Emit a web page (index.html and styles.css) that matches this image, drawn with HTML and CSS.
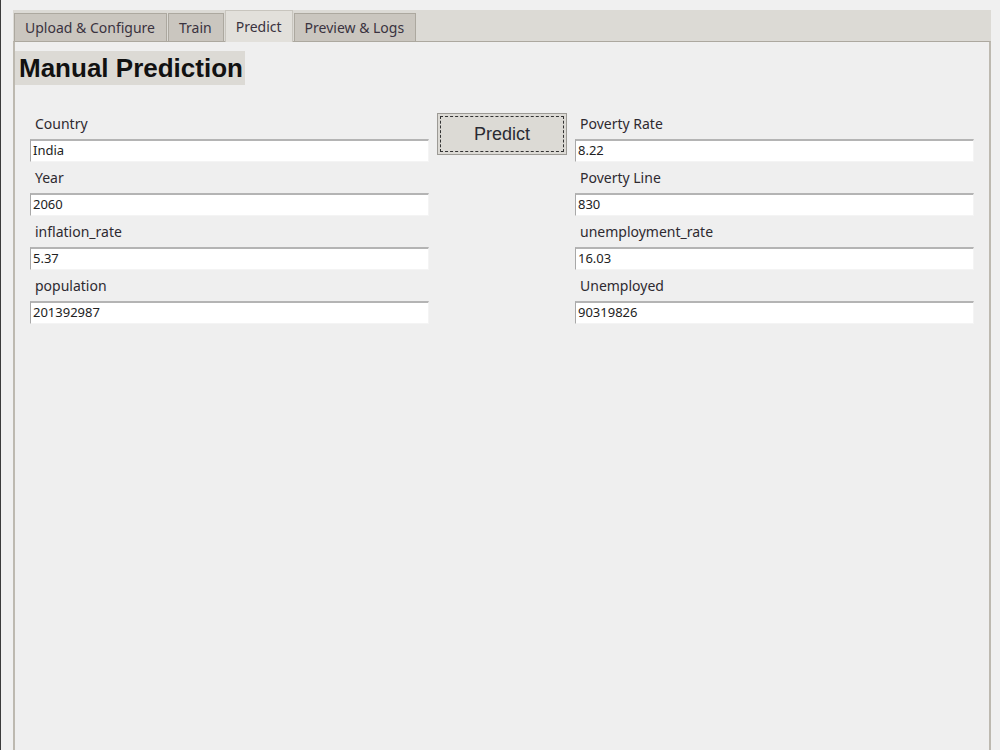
FILE: index.html
```html
<!DOCTYPE html>
<html>
<head>
<meta charset="utf-8">
<link rel="stylesheet" href="styles.css">
</head>
<body>
<div class="app">
  <div class="notebook">
    <div class="tabbar">
      <div class="tab">Upload &amp; Configure</div>
      <div class="tab">Train</div>
      <div class="tab active">Predict</div>
      <div class="tab">Preview &amp; Logs</div>
    </div>
    <div class="pane">
      <h1 class="title">Manual Prediction</h1>
      <div class="form">
        <div class="col">
          <div class="label">Country</div>
          <div class="entry">India</div>
          <div class="label">Year</div>
          <div class="entry">2060</div>
          <div class="label">inflation_rate</div>
          <div class="entry">5.37</div>
          <div class="label">population</div>
          <div class="entry">201392987</div>
        </div>
        <div class="btncol">
          <button class="predict">Predict</button>
        </div>
        <div class="col">
          <div class="label">Poverty Rate</div>
          <div class="entry">8.22</div>
          <div class="label">Poverty Line</div>
          <div class="entry">830</div>
          <div class="label">unemployment_rate</div>
          <div class="entry">16.03</div>
          <div class="label">Unemployed</div>
          <div class="entry">90319826</div>
        </div>
      </div>
    </div>
  </div>
</div>
</body>
</html>
```
FILE: styles.css
```css
html, body {
  margin: 0;
  padding: 0;
}
body {
  width: 1000px;
  height: 750px;
  overflow: hidden;
  box-sizing: border-box;
  background: #f0f0f0;
  border-left: 1px solid #3c3c3c;
  font-family: "Noto Sans", "DejaVu Sans", sans-serif;
  color: #2b2b2b;
}
.app {
  padding: 10px 9px 0 12px;
}
.notebook {
  display: flex;
  flex-direction: column;
  height: 740px;
}
.tabbar {
  display: flex;
  align-items: flex-end;
  height: 31px;
  background: #dcdad5;
  padding-left: 1px;
  position: relative;
  z-index: 1;
}
.tab {
  box-sizing: border-box;
  height: 28px;
  padding: 0 11px 0 10px;
  line-height: 28px;
  font-size: 14px;
  color: #3a3340;
  background: #cac6bf;
  border: 1px solid #aca89f;
  border-bottom: none;
  margin-right: 1px;
  white-space: nowrap;
}
.tab.active {
  height: 32px;
  line-height: 31px;
  margin-bottom: -1px;
  background: #e2e0db;
  border-color: #c8c5be;
  padding: 0 10px;
}
.pane {
  flex: 1;
  background: #efefef;
  border-top: 1px solid #aca89f;
  border-left: 2px solid #bdb9b0;
  border-right: 2px solid #bdb9b0;
}
.title {
  width: fit-content;
  margin: 9px 0 0 0;
  padding: 0 2px 0 4px;
  background: #dcdad5;
  font-family: "Liberation Sans", Arial, sans-serif;
  font-weight: bold;
  font-size: 26px;
  line-height: 34px;
  color: #111;
}
.form {
  display: grid;
  grid-template-columns: 399px 130px 399px;
  column-gap: 8px;
  margin-top: 23px;
  padding-left: 15px;
}
.col {
  display: flex;
  flex-direction: column;
}
.label {
  padding: 7px 0 6px 5px;
  line-height: 18px;
  font-size: 14px;
  color: #2e2a30;
}
.entry {
  box-sizing: border-box;
  height: 23px;
  background: #fff;
  border-top: 2px solid #b4b4b4;
  border-left: 1px solid #a8a8a8;
  border-right: 1px solid #f4f4f4;
  border-bottom: 1px solid #f4f4f4;
  padding-left: 2px;
  font-size: 13px;
  line-height: 19px;
  color: #222;
}
.btncol {
  display: flex;
  flex-direction: column;
}
.predict {
  margin-top: 5px;
  height: 42px;
  background: #dcdad5;
  border: 1px solid #9c9a95;
  outline: 1px dashed #333;
  outline-offset: -4px;
  font-family: "Liberation Sans", Arial, sans-serif;
  font-size: 18px;
  color: #2a2a33;
  padding: 0;
}
```
